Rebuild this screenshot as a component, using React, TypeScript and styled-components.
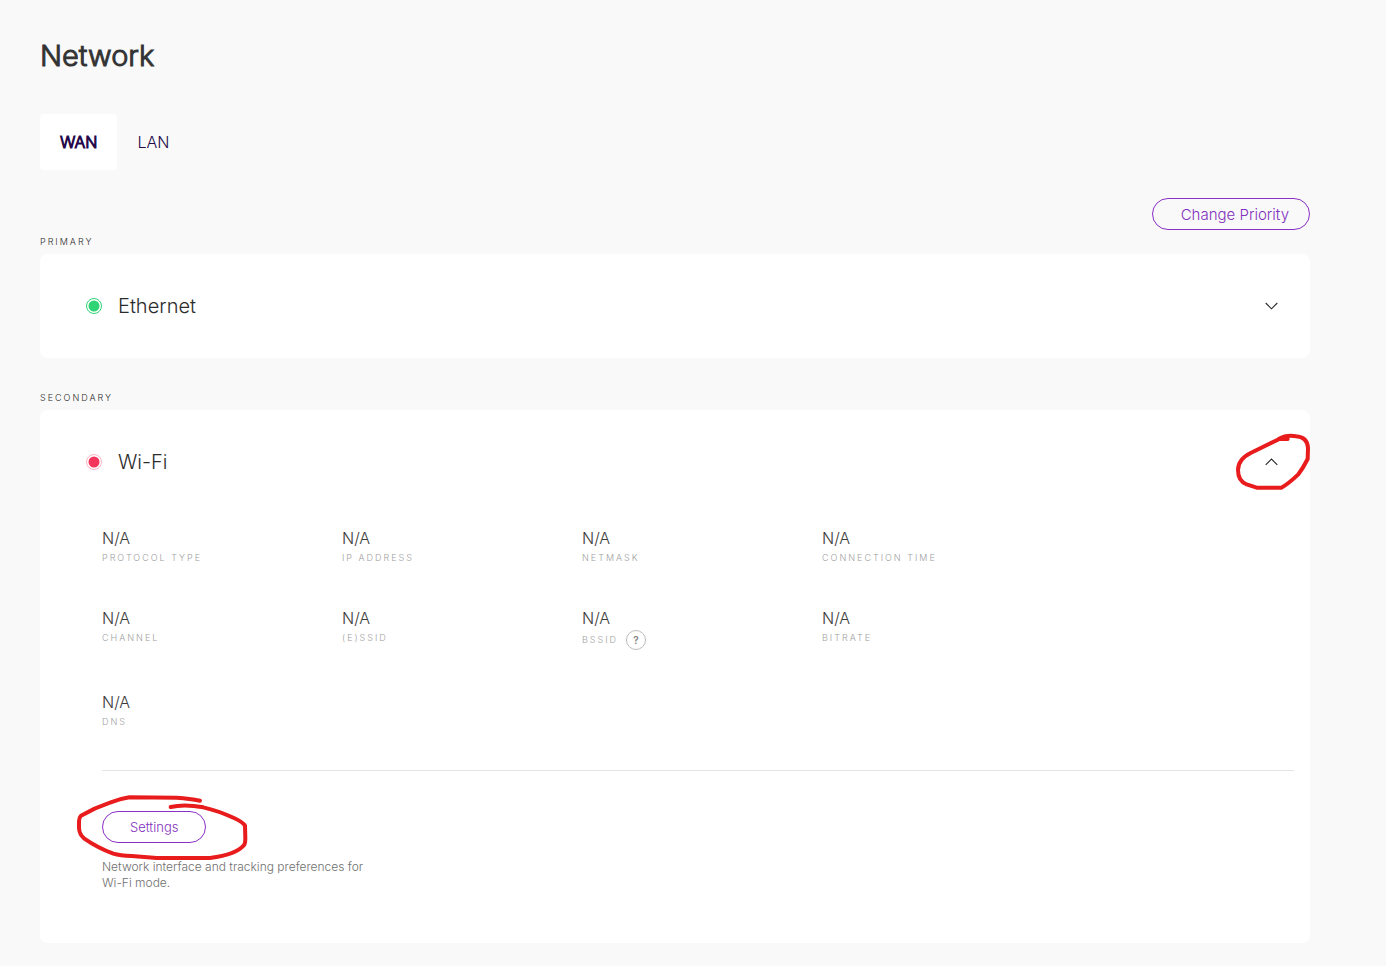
import React, { useState } from "react";
import styled, { createGlobalStyle } from "styled-components";

const GlobalStyle = createGlobalStyle`
  * { box-sizing: border-box; }
  body {
    margin: 0;
    background: #f9f9f9;
    color: #2b2b2b;
    font-family: Inter, "Liberation Sans", sans-serif;
    font-weight: 300;
  }
  button { font: inherit; cursor: pointer; }
`;

const Page = styled.main`
  padding: 36px 76px 23px 40px;
`;

const Title = styled.h1`
  margin: 0 0 38px;
  font-size: 29px;
  line-height: 40px;
  font-weight: 300;
  color: #333;
  -webkit-text-stroke: 1px currentColor;
`;

const Tabs = styled.div`
  display: flex;
  margin-bottom: 28px;
`;

const Tab = styled.button<{ $active: boolean }>`
  height: 56px;
  padding: 0 20px;
  border: 0;
  border-radius: 4px;
  color: #240a4a;
  background: ${(p) => (p.$active ? "#fff" : "transparent")};
  -webkit-text-stroke: ${(p) => (p.$active ? "1px currentColor" : "0")};
  && {
    font-size: 16px;
    line-height: 24px;
  }
`;

const Actions = styled.div`
  display: flex;
  justify-content: flex-end;
`;

const PillButton = styled.button<{ $size: "small" | "medium" }>`
  height: 32px;
  padding: ${(p) => (p.$size === "small" ? "0 27px" : "0 20px 0 28px")};
  border: 1px solid #8a2fc4;
  border-radius: 16px;
  background: transparent;
  color: #8230bd;
  && { font-size: ${(p) => (p.$size === "small" ? 13 : 15)}px; }
`;

const Section = styled.section`
  & + & { margin-top: 28px; }
`;

const SectionLabel = styled.h2`
  margin: 0;
  font-size: 9px;
  line-height: 24px;
  font-weight: 300;
  letter-spacing: 2px;
  text-transform: uppercase;
`;

const Card = styled.div`
  border-radius: 8px;
  background: #fff;
`;

const CardHeader = styled.div`
  display: flex;
  align-items: center;
  gap: 16px;
  height: 104px;
  padding: 0 16px 0 46px;
`;

const CardTitle = styled.h3`
  flex: 1;
  margin: 0;
  font-size: 20px;
  line-height: 28px;
  font-weight: 300;
`;

const Marked = styled.div`
  position: relative;
  display: flex;
  width: fit-content;
`;

const ToggleButton = styled.button`
  display: grid;
  place-items: center;
  width: 44px;
  height: 44px;
  padding: 0;
  border: 0;
  background: transparent;
`;

const Scribble = styled.svg`
  position: absolute;
  pointer-events: none;
  fill: none;
  stroke: #e81c1c;
  stroke-width: 12;
  stroke-linecap: round;
  stroke-linejoin: round;
`;

const ToggleScribble = styled(Scribble)`
  top: -10px;
  left: -18px;
`;

const SettingsScribble = styled(Scribble)`
  top: -17px;
  left: -26px;
`;

const CardBody = styled.div`
  padding: 12px 16px 52px 62px;
`;

const Details = styled.dl`
  display: grid;
  grid-template-columns: repeat(4, 240px);
  gap: 40px 0;
  margin: 0 0 40px;
`;

const Detail = styled.div`
  display: flex;
  flex-direction: column-reverse;
  justify-content: flex-end;
`;

const DetailName = styled.dt`
  display: flex;
  align-items: center;
  gap: 8px;
  font-size: 9px;
  line-height: 16px;
  letter-spacing: 2px;
  text-transform: uppercase;
  color: #a0a0a0;
`;

const DetailValue = styled.dd`
  margin: 0;
  font-size: 16px;
  line-height: 24px;
  color: #3c3c3c;
`;

const HelpButton = styled.button`
  width: 20px;
  height: 20px;
  padding: 0;
  border: 1px solid #bdbdbd;
  border-radius: 50%;
  background: transparent;
  color: #808080;
  letter-spacing: 0;
  && { font-size: 10px; font-weight: 600; line-height: 18px; }
`;

const Footer = styled.div`
  padding-top: 40px;
  border-top: 1px solid #e4e4e4;
`;

const Hint = styled.p`
  max-width: 280px;
  margin: 16px 0 0;
  font-size: 12px;
  line-height: 16px;
  color: #707070;
`;

const StatusDot = ({ color, ring }: { color: string; ring: string }) => (
  <svg width="16" height="16" viewBox="0 0 16 16" aria-hidden="true">
    <circle cx="8" cy="8" r="7.5" fill="none" stroke={ring} />
    <circle cx="8" cy="8" r="5.5" fill={color} />
  </svg>
);

const Chevron = ({ up }: { up: boolean }) => (
  <svg width="14" height="8" viewBox="0 0 14 8" fill="none" stroke="#2b2b2b" strokeWidth="1.1" aria-hidden="true">
    <path d={up ? "M0.7 6.8 L6.5 1 L12.3 6.8" : "M0.7 1 L6.5 6.8 L12.3 1"} />
  </svg>
);

const details = [
  { name: "Protocol type" },
  { name: "IP address" },
  { name: "Netmask" },
  { name: "Connection time" },
  { name: "Channel" },
  { name: "(E)SSID" },
  { name: "BSSID", help: true },
  { name: "Bitrate" },
  { name: "DNS" },
];

export default function App() {
  const [tab, setTab] = useState("WAN");
  return (
    <>
      <GlobalStyle />
      <Page>
        <Title>Network</Title>
        <Tabs role="tablist">
          {["WAN", "LAN"].map((name) => (
            <Tab key={name} role="tab" aria-selected={tab === name} $active={tab === name} onClick={() => setTab(name)}>
              {name}
            </Tab>
          ))}
        </Tabs>
        <Actions>
          <PillButton $size="medium">Change Priority</PillButton>
        </Actions>

        <Section>
          <SectionLabel>Primary</SectionLabel>
          <Card>
            <CardHeader>
              <StatusDot color="#2fd475" ring="#2fd475" />
              <CardTitle>Ethernet</CardTitle>
              <ToggleButton aria-label="Expand Ethernet" aria-expanded={false}>
                <Chevron up={false} />
              </ToggleButton>
            </CardHeader>
          </Card>
        </Section>

        <Section>
          <SectionLabel>Secondary</SectionLabel>
          <Card>
            <CardHeader>
              <StatusDot color="#f5365c" ring="#fbb4c3" />
              <CardTitle>Wi-Fi</CardTitle>
              <Marked>
                <ToggleButton aria-label="Collapse Wi-Fi" aria-expanded={true}>
                  <Chevron up />
                </ToggleButton>
                <ToggleScribble width="82" height="64" viewBox="36 30 246 192" aria-hidden="true">
                  <path d="M203 57 L178 57 L92 99 Q54 118 54 150 Q54 183 80 193 L110 203 L184 203 Q205 192 234 164 Q249 145 263 117 L264 84 Q262 51 228 49 Q200 44 176 57" />
                </ToggleScribble>
              </Marked>
            </CardHeader>
            <CardBody>
              <Details>
                {details.map(({ name, help }) => (
                  <Detail key={name}>
                    <DetailName>
                      {name}
                      {help && <HelpButton aria-label="About BSSID">?</HelpButton>}
                    </DetailName>
                    <DetailValue>N/A</DetailValue>
                  </Detail>
                ))}
              </Details>
              <Footer>
                <Marked>
                  <PillButton $size="small">Settings</PillButton>
                  <SettingsScribble width="176" height="68" viewBox="48 42 528 204" aria-hidden="true">
                    <path d="M420 62 Q390 56 350 53 L208 52 Q180 56 150 68 Q105 83 63 107 Q57 113 57 124 L57 144 Q58 163 72 175 Q112 203 160 221 Q180 227 215 228 L290 234 L450 234 Q530 223 553 194 Q556 188 556 176 L555 137 Q548 126 522 114 Q474 92 430 82 Q372 71 332 81" />
                  </SettingsScribble>
                </Marked>
                <Hint>Network interface and tracking preferences for Wi-Fi mode.</Hint>
              </Footer>
            </CardBody>
          </Card>
        </Section>
      </Page>
    </>
  );
}
